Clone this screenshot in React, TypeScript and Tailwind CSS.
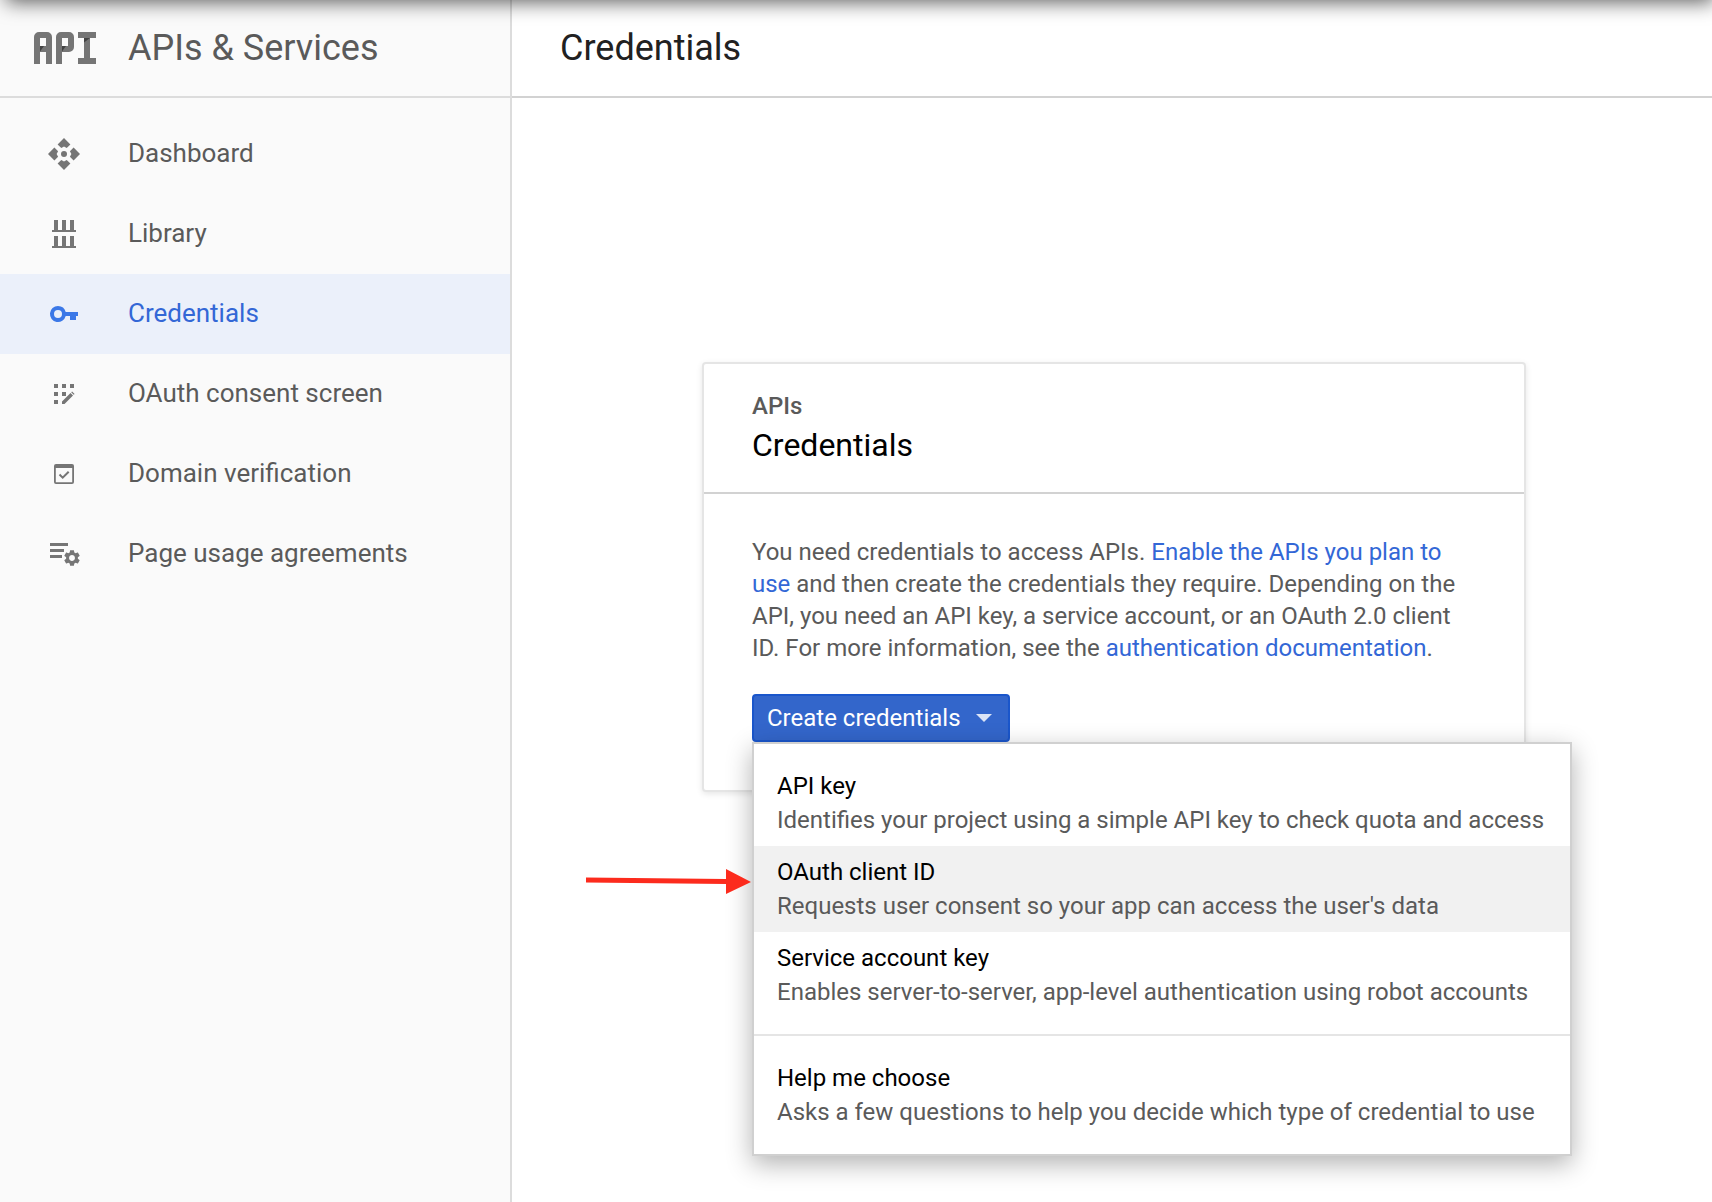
import type { ReactNode } from "react";

function ApiLogo() {
  return (
    <svg viewBox="0 0 62 32" className="h-8 w-[62px] shrink-0" aria-hidden="true">
      <g fill="#757575">
        <path fillRule="evenodd" d="M0 32V5a5 5 0 0 1 5-5h8a5 5 0 0 1 5 5v27h-6V20H6v12zM6 6v8h6V6z" />
        <path
          fillRule="evenodd"
          d="M22 32V5a5 5 0 0 1 5-5h8a5 5 0 0 1 5 5v10a5 5 0 0 1-5 5h-7v12zM28 6v8h6V6z"
        />
        <path d="M44 0h18v6h-6v20h6v6H44v-6h6V6h-6z" />
      </g>
      <path fill="#424242" d="M6 14h4L6 19.500zM28 14h4l-4 5.500zM50 6h6l-6 4.500z" />
    </svg>
  );
}

function Icon({ children }: { children: ReactNode }) {
  return (
    <svg viewBox="0 0 32 32" className="size-8 shrink-0" fill="currentColor" aria-hidden="true">
      {children}
    </svg>
  );
}

const dashboardIcon = (
  <Icon>
    <circle cx="16" cy="16" r="3" />
    <path d="M16 0l6.400 6.400-3.700 3.700L16 8.600l-2.700 1.500-3.700-3.700z" />
    <path d="M16 32l6.400-6.400-3.700-3.700-2.700 1.500-2.700-1.500-3.700 3.700z" />
    <path d="M0 16l6.400-6.400 3.700 3.700L8.600 16l1.500 2.700-3.700 3.700z" />
    <path d="M32 16l-6.400-6.400-3.700 3.700 1.500 2.700-1.500 2.700 3.700 3.700z" />
  </Icon>
);

const libraryIcon = (
  <Icon>
    <path d="M6 2h4v10h4V2h4v10h4V2h4v10h2v2H4v-2h2z" />
    <path d="M6 18h4v10h4V18h4v10h4V18h4v10h2v2H4v-2h2z" />
  </Icon>
);

const keyIcon = (
  <Icon>
    <path
      fillRule="evenodd"
      d="M10 8a8 8 0 0 1 7.700 6H30v4h-2v4h-6v-4h-4.300A8 8 0 1 1 10 8zm0 4a4 4 0 1 0 0 8 4 4 0 0 0 0-8z"
    />
  </Icon>
);

const consentIcon = (
  <Icon>
    <path d="M6 6h4v4H6zM14 6h4v4h-4zM22 6h4v4h-4zM6 14h4v4H6zM14 14h4v4h-4zM6 22h4v4H6z" />
    <path d="M14 26v-2.500l8.500-8.500 2.500 2.500-8.500 8.500zM23.200 14.300l.9-.9 2.500 2.500-.9.9z" />
  </Icon>
);

const domainIcon = (
  <Icon>
    <path
      fillRule="evenodd"
      d="M8 6h16a2 2 0 0 1 2 2v16a2 2 0 0 1-2 2H8a2 2 0 0 1-2-2V8a2 2 0 0 1 2-2zm-.2 4v14.200h16.400V10z"
    />
    <path d="M11.500 16.500l3.200 3.200 6-6" fill="none" stroke="currentColor" strokeWidth="2" />
  </Icon>
);

const agreementsIcon = (
  <Icon>
    <path d="M2 5h18v3H2zM2 11h14v3H2zM2 17h12v3H2z" />
    <path
      transform="translate(14.160 10.160) scale(.82)"
      d="M19.140 12.940c.04-.3.06-.61.06-.94 0-.32-.02-.64-.07-.94l2.030-1.580c.18-.14.23-.41.12-.61l-1.920-3.320c-.12-.22-.37-.29-.59-.22l-2.390.96c-.5-.38-1.030-.7-1.620-.94l-.36-2.540c-.04-.24-.24-.41-.48-.41h-3.840c-.24 0-.43.17-.47.41l-.36 2.540c-.59.24-1.130.57-1.620.94l-2.390-.96c-.22-.08-.47 0-.59.22L2.740 8.870c-.12.21-.08.47.12.61l2.030 1.580c-.05.3-.09.63-.09.94s.02.64.07.94l-2.030 1.580c-.18.14-.23.41-.12.61l1.920 3.320c.12.22.37.29.59.22l2.390-.96c.5.38 1.030.7 1.620.94l.36 2.540c.05.24.24.41.48.41h3.840c.24 0 .44-.17.47-.41l.36-2.540c.59-.24 1.130-.56 1.620-.94l2.390.96c.22.08.47 0 .59-.22l1.920-3.320c.12-.22.07-.47-.12-.61l-2.010-1.580zM12 15.600c-1.980 0-3.600-1.620-3.600-3.600s1.620-3.600 3.600-3.600 3.600 1.620 3.600 3.600-1.620 3.600-3.600 3.600z"
    />
  </Icon>
);

const navItems = [
  { label: "Dashboard", icon: dashboardIcon },
  { label: "Library", icon: libraryIcon },
  { label: "Credentials", icon: keyIcon, active: true },
  { label: "OAuth consent screen", icon: consentIcon },
  { label: "Domain verification", icon: domainIcon },
  { label: "Page usage agreements", icon: agreementsIcon },
];

const credentialTypes = [
  { title: "API key", text: "Identifies your project using a simple API key to check quota and access" },
  {
    title: "OAuth client ID",
    text: "Requests user consent so your app can access the user's data",
    hovered: true,
  },
  {
    title: "Service account key",
    text: "Enables server-to-server, app-level authentication using robot accounts",
  },
];

const helpItem = {
  title: "Help me choose",
  text: "Asks a few questions to help you decide which type of credential to use",
};

function MenuItem({ title, text, hovered }: { title: string; text: string; hovered?: boolean }) {
  return (
    <button
      type="button"
      role="menuitem"
      className={`relative block w-full px-[23px] py-[9px] text-left whitespace-nowrap ${hovered ? "bg-[#f1f1f1]" : "bg-white"}`}
    >
      <span className="block text-black">{title}</span>
      <span className="block text-[#5a5a5a]">{text}</span>
      {hovered && (
        <svg
          viewBox="0 0 166 26"
          className="absolute top-[23px] right-full mr-0.5 h-[26px] w-[166px]"
          fill="#fc2b1d"
          aria-hidden="true"
        >
          <path d="M0 8.500l140 1.500V0l25 13-25 12V15L0 13.500z" />
        </svg>
      )}
    </button>
  );
}

function Sidebar() {
  return (
    <aside className="w-[512px] shrink-0 border-r-2 border-[#dcdcdc] bg-[#fafafa]">
      <div className="flex h-[98px] items-center gap-8 border-b-2 border-[#dcdcdc] pl-[34px] text-[#5a5a5a]">
        <ApiLogo />
        <span className="text-4xl">APIs &amp; Services</span>
      </div>
      <nav className="pt-4">
        {navItems.map((item) => (
          <a
            key={item.label}
            href="#"
            aria-current={item.active ? "page" : undefined}
            className={`flex h-20 items-center gap-12 pl-12 text-[26px] ${item.active ? "bg-[#ebf0fa] text-[#3367d6]" : "text-[#5a5a5a]"}`}
          >
            <span className={item.active ? "text-[#3b78e7]" : "text-[#757575]"}>{item.icon}</span>
            <span className="pb-0.5">{item.label}</span>
          </a>
        ))}
      </nav>
    </aside>
  );
}

export default function App() {
  return (
    <div className="relative flex min-h-screen overflow-hidden bg-white font-['Roboto',sans-serif]">
      <div className="pointer-events-none absolute -top-10 right-0 left-2 z-10 h-10 shadow-[0_0_20px_2px_rgba(0,0,0,0.65)]" />
      <Sidebar />
      <main className="min-w-0 grow">
        <header className="flex h-[98px] items-center border-b-2 border-[#d2d2d2] pl-12">
          <h1 className="text-4xl text-[#212121]">Credentials</h1>
        </header>
        <div className="flex justify-center pt-[264px] pl-1">
          <section className="w-[824px] rounded-sm border-2 border-[#e5e5e5] bg-white text-2xl shadow-[0_2px_6px_rgba(0,0,0,0.1)]">
            <div className="border-b-2 border-[#d2d2d2] px-12 pt-[26px] pb-6">
              <p className="leading-8 font-medium text-[#5a5a5a]">APIs</p>
              <h2 className="text-[32px] leading-[46px] text-black">Credentials</h2>
            </div>
            <div className="px-12 pt-[42px] pb-12">
              <p className="leading-8 text-[#5a5a5a]">
                You need credentials to access APIs.{" "}
                <a href="#" className="text-[#3367d6]">
                  Enable the APIs you plan to use
                </a>{" "}
                and then create the credentials they require. Depending on the API, you need an API
                key, a service account, or an OAuth 2.0 client ID. For more information, see the{" "}
                <a href="#" className="text-[#3367d6]">
                  authentication documentation
                </a>
                .
              </p>
              <div className="relative mt-[30px] w-fit">
                <button
                  type="button"
                  aria-haspopup="menu"
                  aria-expanded="true"
                  className="flex h-12 items-center gap-[15px] rounded-sm border-2 border-[#1a56cb] bg-[#3366cb] pr-4 pl-[13px] text-white"
                >
                  Create credentials
                  <svg viewBox="0 0 16 8" className="h-2 w-4" fill="#dbe4f6" aria-hidden="true">
                    <path d="M0 0h16L8 8z" />
                  </svg>
                </button>
                <div
                  role="menu"
                  className="absolute top-full left-0 w-[820px] border-2 border-[#d0d0d0] bg-white leading-[34px] shadow-[0_8px_24px_rgba(0,0,0,0.3)]"
                >
                  <div className="py-4">
                    {credentialTypes.map((item) => (
                      <MenuItem key={item.title} {...item} />
                    ))}
                  </div>
                  <div className="border-t-2 border-[#e5e5e5] py-4">
                    <MenuItem {...helpItem} />
                  </div>
                </div>
              </div>
            </div>
          </section>
        </div>
      </main>
    </div>
  );
}
